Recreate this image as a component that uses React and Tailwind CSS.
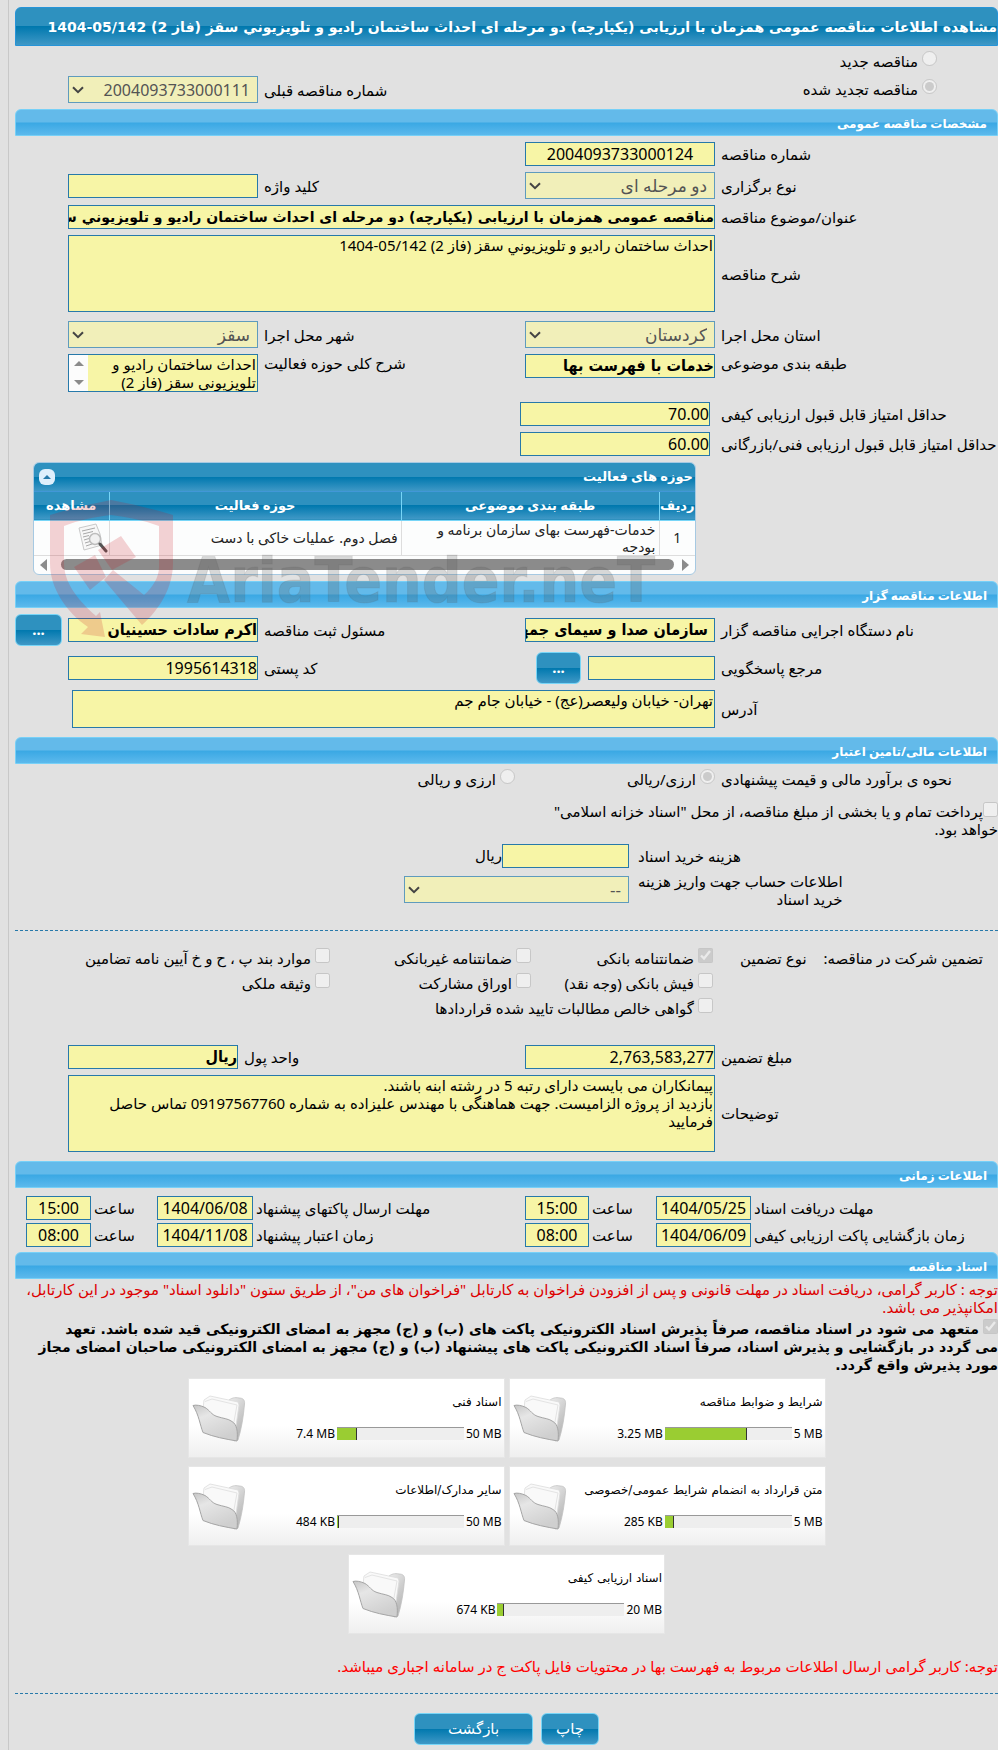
import clsx from 'clsx';

const FORM_GRID = 'grid grid-cols-[277fr_190fr_255fr_190fr_47fr] gap-x-1.5';
const TIME_GRID = 'grid grid-cols-[244fr_95fr_61fr_64fr_266fr_96fr_60fr_65fr_8fr] gap-x-[3px] items-center';
const FIELD = 'block w-full min-w-0 border border-[#2779aa] bg-[#f7f5a6] text-black outline-none';
const CONDENSED = "text-base font-['DejaVu_Sans_Condensed','DejaVu_Sans',sans-serif] font-bold";
const WIDE_BOLD = "text-sm font-['DejaVu_Sans',sans-serif] font-bold";
const DARK = 'bg-[linear-gradient(#2e91bf_0%,#2e91bf_50%,#0078ae_50%,#3f98c6_100%)]';
const LIGHT = 'bg-[linear-gradient(#63baea_0%,#63baea_48%,#3aa8e4_52%,#5cb9ec_100%)]';

function SectionBar({ title }) {
  return (
    <h2 className={clsx('flex h-[27px] items-center rounded-t-md border border-[#77d0f7] pt-[3px] pr-2.5 text-xs font-bold text-white', LIGHT)}>
      {title}
    </h2>
  );
}

function Label({ htmlFor, className, children }) {
  return (
    <label htmlFor={htmlFor} className={clsx('self-center text-left leading-[18px]', className)}>
      {children}
    </label>
  );
}

function TextField({ id, value = '', font = 'text-base', className, ...rest }) {
  return <input id={id} type="text" readOnly defaultValue={value} className={clsx(FIELD, 'h-6', font, className)} {...rest} />;
}

function TextArea({ id, value, className }) {
  return (
    <textarea id={id} readOnly defaultValue={value} className={clsx(FIELD, 'resize-none overflow-hidden px-px leading-[18px]', className)} />
  );
}

function SelectField({ id, value, className = 'text-[17px]' }) {
  return (
    <div className={clsx('relative min-w-0', className)}>
      <select
        id={id}
        disabled
        className="block h-[27px] w-full appearance-none border border-[#5f9bbd] bg-[#f1efb9] pr-[7px] text-[#545454]"
      >
        <option>{value}</option>
      </select>
      <svg viewBox="0 0 12 8" className="absolute top-[10px] left-1 h-2 w-3" fill="none" stroke="#444" strokeWidth="2">
        <path d="M1 1.2 6 6.2 11 1.2" />
      </svg>
    </div>
  );
}

function Choice({ type = 'checkbox', name, checked, className, children }) {
  return (
    <label className={clsx('flex items-center gap-1 whitespace-nowrap', className)}>
      <input type={type} name={name} disabled defaultChecked={checked} className="mb-1.5 size-[15px] shrink-0" />
      <span>{children}</span>
    </label>
  );
}

function BlueButton({ className, children, ...rest }) {
  return (
    <button type="button" className={clsx('h-8 rounded-md border border-[#77d5f7] text-white', DARK, className)} {...rest}>
      {children}
    </button>
  );
}

function FolderIcon() {
  return (
    <svg viewBox="0 0 54 48" className="h-12 w-[54px] shrink-0">
      <defs>
        <linearGradient id="folderBack" x1="0" y1="0" x2="0.5" y2="1">
          <stop offset="0" stopColor="#ededed" />
          <stop offset="1" stopColor="#b5b5b5" />
        </linearGradient>
        <linearGradient id="folderFront" x1="0" y1="0" x2="0.5" y2="1">
          <stop offset="0" stopColor="#c6c6c6" />
          <stop offset="0.35" stopColor="#e6e6e6" />
          <stop offset="1" stopColor="#cfcfcf" />
        </linearGradient>
      </defs>
      <path d="M36 7c3-3 7-4 11-3 4 0 6 2 5.500 6-1 12-3 25-6.500 36l-4 1z" fill="url(#folderBack)" stroke="#c2c2c2" strokeWidth=".8" />
      <path d="M11 15 12 6l6-4 28 6 1 3-4 28-30-4z" fill="#f9f9f9" stroke="#dcdcdc" strokeWidth=".8" />
      <path d="M13 7.500 20 5l25 6-4 22" fill="none" stroke="#e4e4e4" />
      <path
        d="M1 11.500c3-1 8 0 12 2 5 3 6 7 12 9 6 2 11 2 15 5 5 3 6 10 5 19.500-12-2-23-4-34-8.500C8 31 7 21 1 11.500z"
        fill="url(#folderFront)"
        stroke="#a5a5a5"
      />
    </svg>
  );
}

function DocumentSearchIcon() {
  return (
    <svg viewBox="0 0 32 30" className="h-[30px] w-8">
      <path d="M2 5 19 1l4 10 2 11-18 5z" fill="#f7f7f7" stroke="#c9c9c9" />
      <path d="m5 8 13-3M6 11l10-2.500M6 14l6-1.500M7 17l5-1.500M8 20l5-1.500M9 23l6-2" stroke="#a8a8a8" />
      <circle cx="18" cy="16" r="5.500" fill="#f1f1f1" stroke="#bdbdbd" strokeWidth="1.500" />
      <path d="m23 21 6 7" stroke="#555" strokeWidth="3" strokeLinecap="round" />
    </svg>
  );
}

function Watermark() {
  return (
    <svg viewBox="0 0 640 140" className="pointer-events-none absolute top-[38px] left-4 h-[140px] w-[640px]" direction="ltr" aria-hidden="true">
      <g fill="#c8141e" fillOpacity=".19">
        <path d="M1 15C21 9 42 4 62 0c21 4 42 9 62 15v48c0 24-13 46-31 62L55 80l9-10 31 25c9-8 15-18 15-28V26C94 20 78 17 62 15 46 17 30 20 15 26v37c0 20 14 37 32 53l4-4 5 25-24-3 7-7C17 112 1 88 1 63z" />
        <path d="M49 50 72 36l15 21-24 13zM25 67l21-12 11 22-16 13z" />
      </g>
      <text
        x="138"
        y="102"
        fill="#555"
        fillOpacity=".22"
        stroke="#555"
        strokeOpacity=".12"
        className="font-['DejaVu_Sans_Condensed',sans-serif] text-[62px] font-bold"
      >
        AriaTender.neT
      </text>
    </svg>
  );
}

function ActivityGrid() {
  return (
    <div className="relative mr-[302px] ml-[18px]">
      <div className="overflow-hidden rounded-md border border-[#a6c9e2] bg-[#fcfdfd]">
        <div className={clsx('flex h-[29px] items-center justify-between border-b border-[#4297d7] px-0.5 text-[13px] font-bold text-white', DARK)}>
          <span>حوزه های فعالیت</span>
          <button type="button" aria-label="جمع کردن" className="ml-[3px] flex size-4 items-center justify-center rounded-md bg-[#dfeffc]">
            <svg viewBox="0 0 8 4" className="h-1 w-2" fill="#2779aa">
              <path d="M0 4 4 0l4 4z" />
            </svg>
          </button>
        </div>
        <table className="w-full table-fixed border-collapse text-sm leading-[17px]">
          <thead>
            <tr className={clsx('h-7 border-b border-[#77d5f7] text-[13px] text-white', DARK)}>
              <th className="w-[36px] border-l border-[#77d5f7]">ردیف</th>
              <th className="w-[39%] border-l border-[#77d5f7]">طبقه بندی موضوعی</th>
              <th className="border-l border-[#77d5f7]">حوزه فعالیت</th>
              <th className="w-[75px]">مشاهده</th>
            </tr>
          </thead>
          <tbody className="text-[#222]">
            <tr className="h-[35px] border-b border-[#ddd]">
              <td className="border-l border-[#ddd] text-center">1</td>
              <td className="border-l border-[#ddd] pr-[3px] pl-4">خدمات-فهرست بهای سازمان برنامه و بودجه</td>
              <td className="border-l border-[#ddd] pr-[3px]">فصل دوم. عملیات خاکی با دست</td>
              <td>
                <DocumentSearchIcon />
              </td>
            </tr>
          </tbody>
        </table>
        <div className="flex h-[18px] items-center gap-2 px-1.5">
          <svg viewBox="0 0 7 12" className="h-3 w-[7px]" fill="#8b8b8b">
            <path d="m0 0 7 6-7 6z" />
          </svg>
          <div className="h-[11px] flex-1 rounded-full bg-[#8b8b8b]" />
          <svg viewBox="0 0 7 12" className="mr-1.5 h-3 w-[7px]" fill="#8b8b8b">
            <path d="M7 0 0 6l7 6z" />
          </svg>
        </div>
      </div>
      <Watermark />
    </div>
  );
}

const DEADLINES = [
  ['مهلت دریافت اسناد', '1404/05/25', '15:00', 'مهلت ارسال پاکتهای پیشنهاد', '1404/06/08', '15:00'],
  ['زمان بازگشایی پاکت ارزیابی کیفی', '1404/06/09', '08:00', 'زمان اعتبار پیشنهاد', '1404/11/08', '08:00'],
];

function DeadlineRow({ row, index }) {
  const [rightLabel, rightDate, rightTime, leftLabel, leftDate, leftTime] = row;
  const id = `deadline-${index}`;
  return (
    <div className={TIME_GRID}>
      <Label htmlFor={`${id}-a`}>{rightLabel}</Label>
      <TextField id={`${id}-a`} value={rightDate} className="text-center" />
      <Label htmlFor={`${id}-b`}>ساعت</Label>
      <TextField id={`${id}-b`} value={rightTime} className="text-center" />
      <Label htmlFor={`${id}-c`}>{leftLabel}</Label>
      <TextField id={`${id}-c`} value={leftDate} className="text-center" />
      <Label htmlFor={`${id}-d`}>ساعت</Label>
      <TextField id={`${id}-d`} value={leftTime} className="text-center" />
    </div>
  );
}

const DOCUMENTS = [
  { title: 'شرایط و ضوابط مناقصه', used: '3.25 MB', max: '5 MB', percent: 65 },
  { title: 'اسناد فنی', used: '7.4 MB', max: '50 MB', percent: 16 },
  { title: 'متن قرارداد به انضمام شرایط عمومی/خصوصی', used: '285 KB', max: '5 MB', percent: 7 },
  { title: 'سایر مدارک/اطلاعات', used: '484 KB', max: '50 MB', percent: 2 },
  { title: 'اسناد ارزیابی کیفی', used: '674 KB', max: '20 MB', percent: 5 },
];

function DocumentCard({ doc }) {
  return (
    <div className="flex h-20 w-[317px] items-center justify-between border border-[#e6e6e6] bg-linear-to-b from-white from-60% to-[#efefef] pr-0.5 pl-[3px] text-xs text-black">
      <div className="flex flex-col gap-4">
        <p className="font-['DejaVu_Sans',sans-serif] leading-4 whitespace-nowrap">{doc.title}</p>
        <div className="flex items-center gap-0.5 leading-4">
          <span dir="ltr">{doc.max}</span>
          <div className="flex h-[13px] w-[127px] justify-end border-t border-[#999] bg-[#eee]">
            <div className="border-r border-[#333] bg-[#9acd32]" style={{ width: `${doc.percent}%` }} />
          </div>
          <span dir="ltr">{doc.used}</span>
        </div>
      </div>
      <FolderIcon />
    </div>
  );
}

export default function App() {
  return (
    <div dir="rtl" className="min-h-screen bg-[#e1e1e1] pl-2 font-['Noto_Sans','DejaVu_Sans',sans-serif] text-[15px] text-black">
      <main className="min-h-screen overflow-hidden border-l border-[#c8c8c8] pt-[7px] pb-[5px] pl-1.5">
        <h1 className={clsx('flex h-[39px] items-center rounded-t-md border border-[#2694d8] whitespace-nowrap text-white', WIDE_BOLD, DARK)}>
          مشاهده اطلاعات مناقصه عمومی همزمان با ارزیابی (یکپارچه) دو مرحله ای احداث ساختمان رادیو و تلویزیوني سقز (فاز 2) 05/142-1404
        </h1>

        <div className="flex h-7 items-center pt-0.5 pr-[61px]">
          <Choice type="radio" name="kind">مناقصه جدید</Choice>
        </div>
        <div className={clsx(FORM_GRID, 'mb-1 h-[31px] items-center')}>
          <Choice type="radio" name="kind" checked className="col-span-2 pr-[61px]">مناقصه تجدید شده</Choice>
          <Label htmlFor="previous">شماره مناقصه قبلی</Label>
          <SelectField id="previous" value="2004093733000111" className="text-base" />
        </div>

        <SectionBar title="مشخصات مناقصه عمومی" />
        <div className="flex flex-col gap-1.5 py-1.5">
          <div className={FORM_GRID}>
            <Label htmlFor="number">شماره مناقصه</Label>
            <TextField id="number" value="2004093733000124" className="text-center" />
          </div>
          <div className={FORM_GRID}>
            <Label htmlFor="method">نوع برگزاری</Label>
            <SelectField id="method" value="دو مرحله ای" />
            <Label htmlFor="keyword">کلید واژه</Label>
            <TextField id="keyword" className="self-center" />
          </div>
          <div className={FORM_GRID}>
            <Label htmlFor="subject">عنوان/موضوع مناقصه</Label>
            <TextField
              id="subject"
              value="مناقصه عمومی همزمان با ارزیابی (یکپارچه) دو مرحله ای احداث ساختمان رادیو و تلویزیوني سقز (فاز 2) 05/142-1404"
              font={WIDE_BOLD}
              className="col-span-3"
            />
          </div>
          <div className={clsx(FORM_GRID, 'mb-[3px]')}>
            <Label htmlFor="description">شرح مناقصه</Label>
            <TextArea id="description" value="احداث ساختمان رادیو و تلویزیوني سقز (فاز 2) 05/142-1404" className="col-span-3 h-[77px]" />
          </div>
          <div className={FORM_GRID}>
            <Label htmlFor="province">استان محل اجرا</Label>
            <SelectField id="province" value="کردستان" />
            <Label htmlFor="city">شهر محل اجرا</Label>
            <SelectField id="city" value="سقز" />
          </div>
          <div className={clsx(FORM_GRID, 'mb-1')}>
            <Label htmlFor="category" className="self-start">طبقه بندی موضوعی</Label>
            <TextField id="category" value="خدمات با فهرست بها" font={CONDENSED} />
            <Label htmlFor="scope" className="self-start">شرح کلی حوزه فعالیت</Label>
            <div className="relative">
              <TextArea id="scope" value="احداث ساختمان رادیو و تلویزیوني سقز (فاز 2)" className="h-[38px] pl-5" />
              <div className="absolute inset-y-px left-px flex w-[19px] flex-col items-center justify-between bg-[#fcfcfc] py-1.5">
                <svg viewBox="0 0 10 5" className="h-[5px] w-2.5" fill="#8b8b8b"><path d="M0 5 5 0l5 5z" /></svg>
                <svg viewBox="0 0 10 5" className="h-[5px] w-2.5" fill="#8b8b8b"><path d="M0 0h10L5 5z" /></svg>
              </div>
            </div>
          </div>
          <div className={FORM_GRID}>
            <Label htmlFor="min-quality">حداقل امتیاز قابل قبول ارزیابی کیفی</Label>
            <div className="-ml-[5px] pr-[5px]">
              <TextField id="min-quality" value="70.00" />
            </div>
          </div>
          <div className={FORM_GRID}>
            <Label htmlFor="min-technical" className="whitespace-nowrap">حداقل امتیاز قابل قبول ارزیابی فنی/بازرگانی</Label>
            <div className="-ml-[5px] pr-[5px]">
              <TextField id="min-technical" value="60.00" />
            </div>
          </div>
          <ActivityGrid />
        </div>

        <SectionBar title="اطلاعات مناقصه گزار" />
        <div className="flex flex-col gap-1.5 pt-1.5 pb-[9px]">
          <div className={clsx(FORM_GRID, 'items-center')}>
            <Label htmlFor="agency">نام دستگاه اجرایی مناقصه گزار</Label>
            <TextField id="agency" value="سازمان صدا و سیمای جمهوری اسلامی ایران" font={CONDENSED} className="pr-1.5" />
            <Label htmlFor="registrar">مسئول ثبت مناقصه</Label>
            <TextField id="registrar" value="اکرم سادات حسینیان" font={CONDENSED} />
            <BlueButton className="w-full font-bold">...</BlueButton>
          </div>
          <div className={clsx(FORM_GRID, 'items-center')}>
            <Label htmlFor="responder">مرجع پاسخگویی</Label>
            <div className="flex items-center gap-[7px]">
              <TextField id="responder" className="flex-1" />
              <BlueButton className="ml-[11px] w-[45px] shrink-0 font-bold">...</BlueButton>
            </div>
            <Label htmlFor="postcode">کد پستی</Label>
            <TextField id="postcode" value="1995614318" />
          </div>
          <div className={FORM_GRID}>
            <Label htmlFor="address">آدرس</Label>
            <div className="col-span-3 pl-1">
              <TextArea id="address" value="تهران- خیابان ولیعصر(عج) - خیابان جام جم" className="h-[38px]" />
            </div>
          </div>
        </div>

        <SectionBar title="اطلاعات مالی/تامین اعتبار" />
        <div className={clsx(FORM_GRID, 'h-[29px] items-center pt-0.5')}>
          <span className="text-left">نحوه ی برآورد مالی و قیمت پیشنهادی</span>
          <Choice type="radio" name="currency" checked>ارزی/ریالی</Choice>
          <Choice type="radio" name="currency" className="pr-1">ارزی و ریالی</Choice>
        </div>
        <label className="mt-[9px] block w-[47%] leading-[18px]">
          <input type="checkbox" disabled className="size-[15px]" />
          پرداخت تمام و یا بخشی از مبلغ مناقصه، از محل "اسناد خزانه اسلامی" خواهد بود.
        </label>
        <div className="mt-1.5 mb-[22px] grid grid-cols-[360fr_225fr_380fr] items-center gap-x-[9px] gap-y-1">
          <Label htmlFor="fee">هزینه خرید اسناد</Label>
          <div className="flex items-center">
            <div className="w-[127px] shrink-0">
              <TextField id="fee" />
            </div>
            <span>ریال</span>
          </div>
          <span />
          <Label htmlFor="account">
            <span className="inline-block text-right">
              اطلاعات حساب جهت واریز هزینه
              <br />
              خرید اسناد
            </span>
          </Label>
          <SelectField id="account" value="--" />
        </div>

        <div className="border-t border-dashed border-[#2779aa]" />
        <div className="mt-[15px] grid grid-cols-[285fr_182fr_201fr_315fr] auto-rows-[25px] items-center">
          <div className="flex justify-between pr-[15px] pl-[27px] whitespace-nowrap">
            <span>تضمین شرکت در مناقصه:</span>
            <span>نوع تضمین</span>
          </div>
          <Choice checked>ضمانتنامه بانکی</Choice>
          <Choice>ضمانتنامه غیربانکی</Choice>
          <Choice>موارد بند پ ، ح و خ آیین نامه تضامین</Choice>
          <Choice className="col-start-2">فیش بانکی (وجه نقد)</Choice>
          <Choice>اوراق مشارکت</Choice>
          <Choice>وثیقه ملکی</Choice>
          <Choice className="col-span-2 col-start-2">گواهی خالص مطالبات تایید شده قراردادها</Choice>
        </div>
        <div className="mt-6 mb-[9px] flex flex-col gap-1.5">
          <div className={FORM_GRID}>
            <Label htmlFor="amount">مبلغ تضمین</Label>
            <TextField id="amount" value="2,763,583,277" />
            <Label htmlFor="unit" className="-ml-5">واحد پول</Label>
            <div className="pr-5">
              <TextField id="unit" value="ریال" font={CONDENSED} />
            </div>
          </div>
          <div className={FORM_GRID}>
            <Label htmlFor="notes">توضیحات</Label>
            <TextArea
              id="notes"
              value={'پیمانکاران می بایست دارای رتبه 5 در رشته ابنه باشند.\nبازدید از پروژه الزامیست. جهت هماهنگی با مهندس علیزاده به شماره 09197567760 تماس حاصل فرمایید'}
              className="col-span-3 h-[77px]"
            />
          </div>
        </div>

        <SectionBar title="اطلاعات زمانی" />
        <div className="mt-2 mb-[5px] flex flex-col gap-[3px]">
          {DEADLINES.map((row, i) => (
            <DeadlineRow key={i} row={row} index={i} />
          ))}
        </div>

        <SectionBar title="اسناد مناقصه" />
        <p className="mt-px leading-[18px] text-[#dd0000]">
          توجه : کاربر گرامی، دریافت اسناد در مهلت قانونی و پس از افزودن فراخوان به کارتابل "فراخوان های من"، از طریق ستون "دانلود اسناد" موجود در این کارتابل، امکانپذیر می باشد.
        </p>
        <label className={clsx('mt-[3px] block', WIDE_BOLD)}>
          <span className="block leading-[18px]">
            <input type="checkbox" disabled defaultChecked className="ml-1 size-[15px]" />
            متعهد می شود در اسناد مناقصه، صرفاً پذیرش اسناد الکترونیکی پاکت های (ب) و (ج) مجهز به امضای الکترونیکی قید شده باشد. تعهد
            <br />
            می گردد در بازگشایی و پذیرش اسناد، صرفاً اسناد الکترونیکی پاکت های پیشنهاد (ب) و (ج) مجهز به امضای الکترونیکی صاحبان امضای مجاز مورد پذیرش واقع گردد.
          </span>
        </label>

        <div className="mx-auto mt-1 flex max-w-[640px] flex-wrap justify-center gap-x-1 gap-y-2">
          {DOCUMENTS.map((doc) => (
            <DocumentCard key={doc.title} doc={doc} />
          ))}
        </div>

        <p className="mt-[23px] mb-[18px] leading-[18px] text-[#ff0000]">توجه: کاربر گرامی ارسال اطلاعات مربوط به فهرست بها در محتویات فایل پاکت ج در سامانه اجباری میباشد.</p>

        <div className="border-t border-dashed border-[#2779aa]" />
        <div className="mt-[19px] flex justify-center gap-2">
          <BlueButton className="w-[58px]">چاپ</BlueButton>
          <BlueButton className="w-[119px]">بازگشت</BlueButton>
        </div>
      </main>
    </div>
  );
}
